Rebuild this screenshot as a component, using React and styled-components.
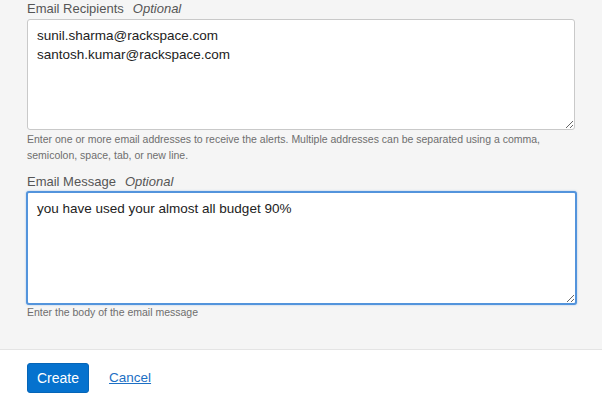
import { createGlobalStyle, styled } from "styled-components";

const GlobalStyle = createGlobalStyle`
  html, body {
    margin: 0;
    padding: 0;
    background: #ffffff;
  }
  body {
    font-family: "Liberation Sans", Arial, sans-serif;
  }
`;

const Page = styled.div`
  width: 602px;
  height: 403px;
  display: flex;
  flex-direction: column;
  overflow: hidden;
`;

const Body = styled.div`
  background: #f5f5f5;
  height: 350px;
  padding: 1px 26px 0 27px;
  box-sizing: border-box;
  border-bottom: 1px solid #e4e4e4;
`;

const Field = styled.div`
  display: flex;
  flex-direction: column;
  margin-bottom: ${(p) => p.$gap || 0}px;
`;

const Label = styled.label`
  font-size: 13px;
  line-height: 16px;
  color: #555;
  margin-bottom: 2px;

  em {
    margin-left: 9px;
    color: #555;
  }
`;

const TextArea = styled.textarea`
  display: block;
  box-sizing: border-box;
  width: ${(p) => (p.$focused ? 551 : 548)}px;
  margin: ${(p) => (p.$focused ? "-1px 0 0 -1px" : "0")};
  height: ${(p) => p.$h}px;
  padding: 6px 9px;
  border: ${(p) => (p.$focused ? "2px solid #5394dc" : "1px solid #c9c9c9")};
  border-radius: 3px;
  background: #fff;
  font-family: "Liberation Sans", Arial, sans-serif;
  font-size: 13.5px;
  line-height: 19px;
  color: #222;
  outline: none;
  box-shadow: ${(p) => (p.$focused ? "0 0 2px rgba(83,148,220,0.5)" : "none")};
  resize: vertical;
`;

const Help = styled.p`
  margin: ${(p) => (p.$tight ? "-1px" : "1px")} 0 0;
  font-size: 10.5px;
  line-height: 16px;
  color: #6e6e6e;
  width: 548px;
`;

const Footer = styled.div`
  flex: 1;
  background: #fff;
  display: flex;
  align-items: flex-start;
  gap: 20px;
  padding: 13px 27px 0;
`;

const PrimaryButton = styled.button`
  height: 30px;
  padding: 0 9px;
  background: #0572ce;
  color: #fff;
  border: 1px solid #0565b7;
  border-radius: 3px;
  font-family: "Liberation Sans", Arial, sans-serif;
  font-size: 14px;
  cursor: pointer;
`;

const LinkButton = styled.a`
  font-size: 13.5px;
  line-height: 30px;
  color: #1c6fc4;
  text-decoration: underline;
  cursor: pointer;
`;

export default function App() {
  return (
    <Page>
      <GlobalStyle />
      <Body>
        <Field $gap={11}>
          <Label>
            Email Recipients<em>Optional</em>
          </Label>
          <TextArea
            $h={111}
            readOnly
            defaultValue={"sunil.sharma@rackspace.com\nsantosh.kumar@rackspace.com"}
          />
          <Help>
            Enter one or more email addresses to receive the alerts. Multiple addresses can be
            separated using a comma, semicolon, space, tab, or new line.
          </Help>
        </Field>
        <Field>
          <Label>
            Email Message<em>Optional</em>
          </Label>
          <TextArea
            $h={114}
            $focused
            readOnly
            defaultValue="you have used your almost all budget 90%"
          />
          <Help $tight>Enter the body of the email message</Help>
        </Field>
      </Body>
      <Footer>
        <PrimaryButton>Create</PrimaryButton>
        <LinkButton>Cancel</LinkButton>
      </Footer>
    </Page>
  );
}
